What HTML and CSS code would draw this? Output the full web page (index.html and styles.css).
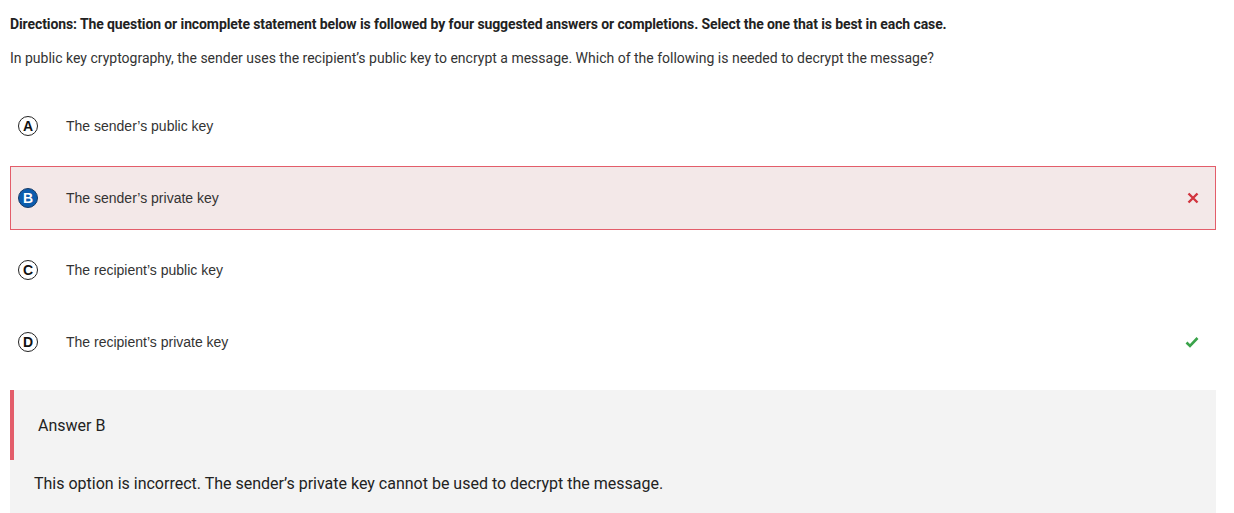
FILE: index.html
```
<!DOCTYPE html>
<html>
<head>
<meta charset="utf-8">
<link rel="stylesheet" href="styles.css">
</head>
<body>
<div class="page">
  <p class="directions">Directions: The question or incomplete statement below is followed by four suggested answers or completions. Select the one that is best in each case.</p>
  <p class="question">In public key cryptography, the sender uses the recipient’s public key to encrypt a message. Which of the following is needed to decrypt the message?</p>
  <div class="options">
    <div class="option">
      <span class="badge">A</span>
      <span class="label">The sender’s public key</span>
    </div>
    <div class="option wrong">
      <span class="badge selected">B</span>
      <span class="label">The sender’s private key</span>
      <svg class="mark" width="12" height="12" viewBox="0 0 12 12"><path d="M1.5 1.5 L10.5 10.5 M10.5 1.5 L1.5 10.5" stroke="#d1343e" stroke-width="2.4" fill="none"/></svg>
    </div>
    <div class="option">
      <span class="badge">C</span>
      <span class="label">The recipient’s public key</span>
    </div>
    <div class="option">
      <span class="badge">D</span>
      <span class="label">The recipient’s private key</span>
      <svg class="mark" width="14" height="12" viewBox="0 0 14 12"><path d="M1.5 6.5 L5 10 L12.5 2" stroke="#3aa34a" stroke-width="2.6" fill="none"/></svg>
    </div>
  </div>
  <div class="feedback">
    <div class="fb-head">Answer B</div>
    <div class="fb-body">This option is incorrect. The sender’s private key cannot be used to decrypt the message.</div>
  </div>
</div>
</body>
</html>
```
FILE: styles.css
```
html, body {
  margin: 0;
  padding: 0;
  background: #fff;
}
.page {
  padding: 0 18px 0 10px;
  font-family: Roboto, "Liberation Sans", sans-serif;
  color: #222;
}
.directions {
  margin: 0;
  padding-top: 16px;
  font-size: 14px;
  line-height: 16px;
  font-weight: 700;
  letter-spacing: -0.1px;
}
.question {
  margin: 18px 0 0 0;
  font-size: 14px;
  line-height: 16px;
  color: #333;
}
.options {
  margin-top: 28px;
  display: flex;
  flex-direction: column;
  gap: 8px;
}
.option {
  height: 64px;
  box-sizing: border-box;
  display: flex;
  align-items: center;
  padding: 0 16px 0 7px;
  border: 1px solid transparent;
}
.option.wrong {
  background: #f3e8e8;
  border-color: #e35d6a;
}
.badge {
  width: 20px;
  height: 20px;
  box-sizing: border-box;
  border: 1.4px solid #222;
  border-radius: 50%;
  display: flex;
  align-items: center;
  justify-content: center;
  font-family: "Liberation Sans", Arial, sans-serif;
  font-weight: 700;
  font-size: 14px;
  color: #111;
  flex: none;
}
.badge.selected {
  background: #0b5cad;
  border-color: #163a66;
  color: #fff;
  font-size: 14px;
}
.label {
  margin-left: 28px;
  font-family: "Liberation Sans", Arial, sans-serif;
  font-size: 14px;
  color: #333;
  flex: 1;
}
.mark {
  flex: none;
}
.feedback {
  margin-top: 16px;
  background: #f3f3f3;
}
.fb-head {
  height: 70px;
  box-sizing: border-box;
  border-left: 4px solid #e35d6a;
  padding-left: 24px;
  display: flex;
  align-items: center;
  font-size: 16px;
  color: #222;
}
.fb-body {
  padding: 14px 24px 20px 24px;
  font-size: 16px;
  line-height: 20px;
  color: #222;
}
```
